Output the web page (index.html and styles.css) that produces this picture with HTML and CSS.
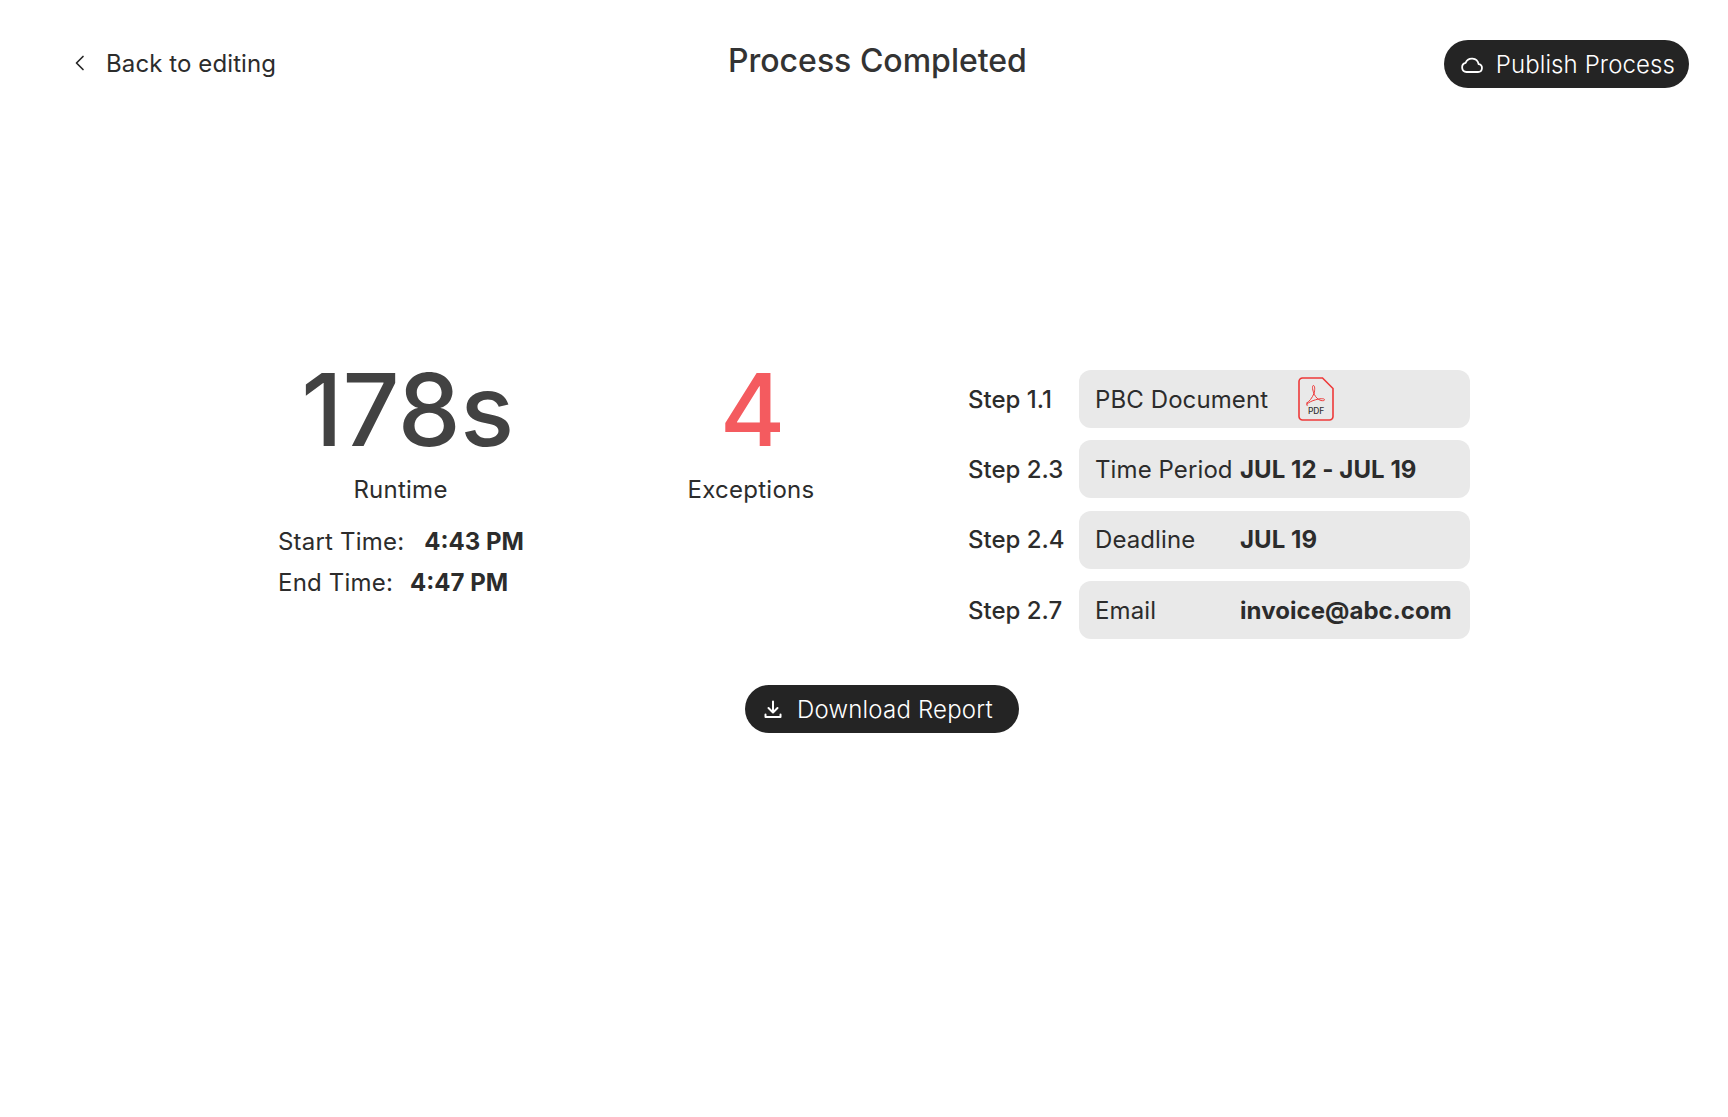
FILE: index.html
```html
<!DOCTYPE html>
<html lang="en">
<head>
<meta charset="UTF-8">
<meta name="viewport" content="width=device-width, initial-scale=1.0">
<title>Process Completed</title>
<link rel="stylesheet" href="styles.css">
</head>
<body>
<header class="topbar">
  <a class="back-link" href="#">
    <svg class="back-icon" width="24" height="24" viewBox="0 0 24 24" fill="none" stroke="#262626" stroke-width="1.7" stroke-linecap="round" stroke-linejoin="round"><path d="M15 5.500 8.500 12l6.500 6.500"/></svg>
    <span>Back to editing</span>
  </a>
  <h1 class="page-title">Process Completed</h1>
  <button class="pill-button publish-button">
    <svg width="24" height="24" viewBox="0 0 24 24" fill="none" stroke="#fff" stroke-width="1.800" stroke-linejoin="round"><path d="M6.500 20h11.500a4 4 0 0 0 .6-7.950 6.800 6.800 0 0 0-13-1.100A4.600 4.600 0 0 0 6.500 20z"/></svg>
    <span>Publish Process</span>
  </button>
</header>

<main class="summary">
  <section class="stat stat-runtime">
    <div class="stat-value">178s</div>
    <div class="stat-label">Runtime</div>
    <div class="times">
      <div class="time-row"><span>Start Time:</span><b>4:43 PM</b></div>
      <div class="time-row time-row-end"><span>End Time:</span><b>4:47 PM</b></div>
    </div>
  </section>

  <section class="stat stat-exceptions">
    <div class="stat-value red">4</div>
    <div class="stat-label">Exceptions</div>
  </section>

  <section class="steps">
    <div class="step">
      <span class="step-name">Step 1.1</span>
      <div class="step-card">
        <span class="field doc-field">PBC Document</span>
        <svg class="pdf-icon" width="36" height="44" viewBox="0 0 36 44" fill="none">
          <path d="M4.500 1h20L35 11.500V39.500a3.500 3.500 0 0 1-3.500 3.500h-27A3.500 3.500 0 0 1 1 39.500v-35A3.500 3.500 0 0 1 4.500 1z" stroke="#ee3a3a" stroke-width="1.600"/>
          <path d="M8 26.500c3.500-2 6-5.500 8-10 1-3.500 1-8-.6-8-1.600 0-1 4.500 1 9 1.500 3 3.500 5 6.500 6 2.500.5 4 0 3.600-1-.5-1.200-5-1-9 .3-3.500 1-6.500 2.500-8.500 4.200-1 1.200 0 1.800 1 .8" stroke="#ee3a3a" stroke-width="1" stroke-linejoin="round"/>
          <text class="pdf-text" x="18" y="37" text-anchor="middle">PDF</text>
        </svg>
      </div>
    </div>
    <div class="step">
      <span class="step-name">Step 2.3</span>
      <div class="step-card"><span class="field">Time Period</span><b>JUL 12 - JUL 19</b></div>
    </div>
    <div class="step">
      <span class="step-name">Step 2.4</span>
      <div class="step-card"><span class="field">Deadline</span><b>JUL 19</b></div>
    </div>
    <div class="step">
      <span class="step-name">Step 2.7</span>
      <div class="step-card"><span class="field">Email</span><b>invoice@abc.com</b></div>
    </div>
  </section>
</main>

<div class="download-row">
  <button class="pill-button download-button">
    <svg width="24" height="24" viewBox="0 0 24 24" fill="none" stroke="#fff" stroke-width="2" stroke-linecap="round" stroke-linejoin="round"><path d="M12 4.500v10.500M7.500 11l4.500 4.500 4.500-4.500M4.500 17.500v2.500h15v-2.500"/></svg>
    <span>Download Report</span>
  </button>
</div>
</body>
</html>
```
FILE: styles.css
```css
body {
  margin: 0;
  height: 1117px;
  background-color: #fff;
  color: #2c2c2c;
  font-family: Inter, 'Liberation Sans', sans-serif;
  font-size: 24px;
  overflow: hidden;
}

.topbar {
  display: flex;
  align-items: flex-start;
  justify-content: space-between;
  padding: 40px 39px 0 68px;
  height: 48px;
}

.back-link {
  display: flex;
  align-items: center;
  gap: 14px;
  height: 46px;
  color: #2c2c2c;
  text-decoration: none;
  font-size: 24px;
  letter-spacing: 0.1px;
}

.page-title {
  margin: -3px 0 0 35px;
  font-size: 32px;
  line-height: 48px;
  font-weight: 450;
  color: #333;
}

.pill-button {
  display: flex;
  align-items: center;
  height: 48px;
  border: none;
  border-radius: 24px;
  background-color: #242424;
  color: #fff;
  font-family: inherit;
  font-size: 24px;
  font-weight: 350;
  letter-spacing: 0.1px;
}

.publish-button {
  gap: 12px;
  padding: 0 14px 0 16px;
}

.summary {
  display: flex;
  margin-top: 264px;
  padding-left: 278px;
}

.stat {
  display: flex;
  flex-direction: column;
  align-items: center;
}

.stat-runtime {
  width: 245px;
}

.stat-exceptions {
  width: 200px;
  margin-left: 128px;
}

.stat-value {
  font-size: 100px;
  line-height: 116px;
  font-weight: 450;
  letter-spacing: -0.4px;
  color: #424242;
  margin-left: 14px;
}

.red {
  color: #f45b5f;
  margin-left: 3px;
  letter-spacing: 0;
}

.stat-label {
  margin-top: 4px;
  line-height: 36px;
  letter-spacing: 0.25px;
}

.times {
  align-self: flex-start;
  margin-top: 13px;
  white-space: nowrap;
  letter-spacing: 0.2px;
}

.time-row {
  display: flex;
  gap: 20px;
  line-height: 41px;
}

.time-row-end {
  gap: 17px;
}

.time-row b {
  font-weight: 700;
  letter-spacing: 0;
}

.step-card b {
  font-weight: 700;
  letter-spacing: 0.05px;
}

.steps {
  display: flex;
  flex-direction: column;
  gap: 12.400px;
  margin-left: 117px;
  margin-top: 18px;
}

.step {
  display: flex;
  align-items: center;
}

.step-name {
  width: 111px;
  font-weight: 450;
}

.step-card {
  display: flex;
  align-items: center;
  box-sizing: border-box;
  width: 391px;
  height: 58px;
  padding: 0 16px;
  border-radius: 12px;
  background-color: #e9e9e9;
  letter-spacing: 0.1px;
}

.field {
  width: 145px;
  flex: none;
  white-space: nowrap;
}

.doc-field {
  width: 203px;
}

.pdf-text {
  font-size: 8.500px;
  font-weight: 500;
  letter-spacing: -0.2px;
  fill: #333;
}

.download-row {
  display: flex;
  margin-top: 46px;
  padding-left: 745px;
}

.download-button {
  gap: 12px;
  padding: 0 26px 0 16px;
  letter-spacing: 0.2px;
}
```
